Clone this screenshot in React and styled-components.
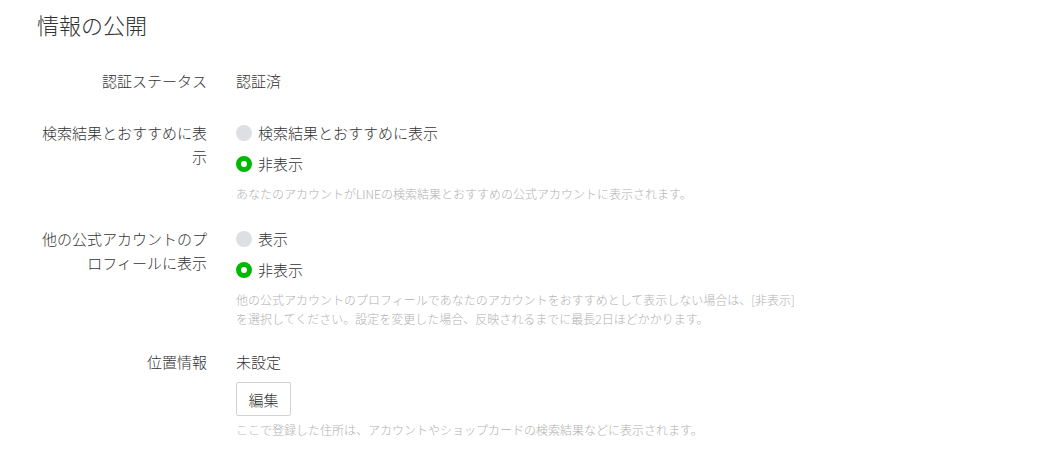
import React, { useState } from "react";
import styled, { createGlobalStyle } from "styled-components";

const GlobalStyle = createGlobalStyle`
  * { box-sizing: border-box; }
  body {
    margin: 0;
    background: #fff;
    color: #333;
    font-family: "Noto Sans CJK JP", "Noto Sans", sans-serif;
    font-weight: 300;
  }
`;

export default function App() {
  const [search, setSearch] = useState("hide");
  const [profile, setProfile] = useState("hide");

  return (
    <Page>
      <GlobalStyle />
      <Title>情報の公開</Title>

      <Row $gap={28}>
        <Label>認証ステータス</Label>
        <Value>
          <Text>認証済</Text>
        </Value>
      </Row>

      <Row $gap={24}>
        <Label>検索結果とおすすめに表示</Label>
        <Value>
          <RadioGroup>
            <Radio
              label="検索結果とおすすめに表示"
              checked={search === "show"}
              onClick={() => setSearch("show")}
            />
            <Radio
              label="非表示"
              checked={search === "hide"}
              onClick={() => setSearch("hide")}
            />
          </RadioGroup>
          <Note>
            あなたのアカウントがLINEの検索結果とおすすめの公式アカウントに表示されます。
          </Note>
        </Value>
      </Row>

      <Row $gap={22}>
        <Label>他の公式アカウントのプロフィールに表示</Label>
        <Value>
          <RadioGroup>
            <Radio
              label="表示"
              checked={profile === "show"}
              onClick={() => setProfile("show")}
            />
            <Radio
              label="非表示"
              checked={profile === "hide"}
              onClick={() => setProfile("hide")}
            />
          </RadioGroup>
          <Note>
            他の公式アカウントのプロフィールであなたのアカウントをおすすめとして表示しない場合は、[非表示]
            <br />
            を選択してください。設定を変更した場合、反映されるまでに最長2日ほどかかります。
          </Note>
        </Value>
      </Row>

      <Row $gap={0}>
        <Label>位置情報</Label>
        <Value>
          <Text>未設定</Text>
          <EditButton>編集</EditButton>
          <Note $top={4}>
            ここで登録した住所は、アカウントやショップカードの検索結果などに表示されます。
          </Note>
        </Value>
      </Row>
    </Page>
  );
}

function Radio({ label, checked, onClick }) {
  return (
    <RadioLabel onClick={onClick}>
      <RadioDot $checked={checked} />
      {label}
    </RadioLabel>
  );
}

const Page = styled.div`
  padding: 9px 0 0 37px;
  width: 1042px;
`;

const Title = styled.h1`
  margin: 0 0 30px;
  font-size: 22px;
  line-height: 30px;
  font-weight: 300;
  color: #333;
`;

const Row = styled.div`
  display: grid;
  grid-template-columns: 170px 1fr;
  column-gap: 29px;
  margin-bottom: ${(p) => p.$gap}px;
`;

const Label = styled.div`
  text-align: right;
  font-size: 15px;
  line-height: 24px;
  color: #333;
`;

const Value = styled.div`
  display: flex;
  flex-direction: column;
  align-items: flex-start;
`;

const Text = styled.div`
  font-size: 15px;
  line-height: 24px;
  color: #333;
`;

const RadioGroup = styled.div`
  display: flex;
  flex-direction: column;
  gap: 7px;
`;

const RadioLabel = styled.label`
  display: flex;
  align-items: center;
  gap: 6px;
  font-size: 15px;
  line-height: 24px;
  color: #333;
  cursor: pointer;
`;

const RadioDot = styled.span`
  width: 16px;
  height: 16px;
  border-radius: 50%;
  flex-shrink: 0;
  background: ${(p) => (p.$checked ? "#fff" : "#dddfe3")};
  border: ${(p) => (p.$checked ? "5px solid #00b900" : "none")};
`;

const Note = styled.p`
  margin: ${(p) => (p.$top !== undefined ? p.$top : 8)}px 0 0;
  font-size: 12px;
  line-height: 19px;
  color: #b1b1b1;
  white-space: nowrap;
`;

const EditButton = styled.button`
  margin-top: 8px;
  width: 55px;
  height: 34px;
  padding: 0;
  background: #fff;
  border: 1px solid #cfd2d6;
  border-radius: 2px;
  font-family: inherit;
  font-weight: 300;
  font-size: 15px;
  color: #333;
  cursor: pointer;
`;
